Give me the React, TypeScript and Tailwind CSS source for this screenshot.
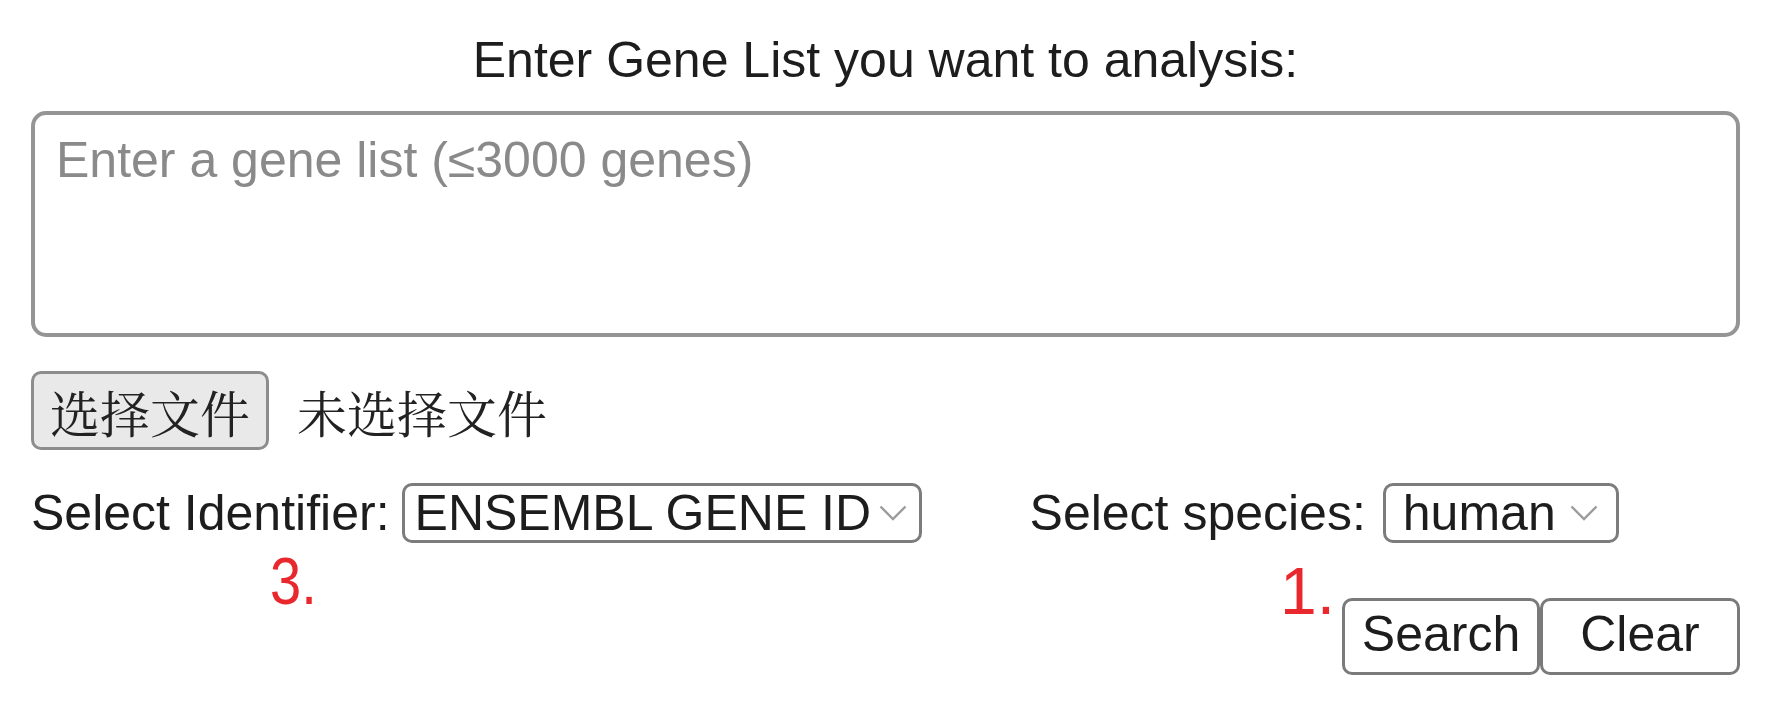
import React from "react";

function Chevron() {
  return (
    <svg width="28" height="16" viewBox="0 0 28 16" fill="none" className="shrink-0">
      <path d="M1.5 1.5 L14 14 L26.5 1.5" stroke="#9c9c9c" strokeWidth="2.4" />
    </svg>
  );
}

export default function App() {
  return (
    <div className="w-[1772px] h-[709px] bg-white pl-[31px] pr-[32px] font-['Liberation_Sans',Arial,sans-serif] text-[#1d1d1d] overflow-hidden">
      <h1 className="pt-[30px] text-center text-[50px] leading-[60px] font-normal">
        Enter Gene List you want to analysis:
      </h1>

      <textarea
        className="mt-[21px] block w-full h-[226px] resize-none rounded-[15px] border-4 border-[#959595] bg-white pl-[21px] pt-[15px] text-[50px] leading-[60px] text-[#1d1d1d] placeholder:text-[#8a8a8a] outline-none"
        placeholder="Enter a gene list (≤3000 genes)"
      />

      <div className="mt-[34px] flex items-center font-['Noto_Serif_CJK_SC','Noto_Sans_CJK_SC',serif] text-[50px] leading-[60px]">
        <button className="flex h-[79px] w-[238px] items-center justify-center rounded-[10px] border-[3px] border-[#8d8d8d] bg-[#e9e9e9] text-[#222]">
          选择文件
        </button>
        <span className="ml-[28px] text-[#222]">未选择文件</span>
      </div>

      <div className="mt-[33px] flex items-center text-[50px] leading-[60px]">
        <span>Select Identifier:</span>
        <div className="ml-[12px] flex h-[60px] w-[520px] items-center justify-between rounded-[10px] border-[3px] border-[#7c7c7c] pl-[10px] pr-[12px] leading-[54px]">
          <span>ENSEMBL GENE ID</span>
          <Chevron />
        </div>
        <span className="ml-[108px]">Select species:</span>
        <div className="ml-[17px] flex h-[60px] w-[236px] items-center justify-between rounded-[10px] border-[3px] border-[#7c7c7c] pl-[17px] pr-[18px] leading-[54px]">
          <span>human</span>
          <Chevron />
        </div>
      </div>

      <div className="mt-[5px] flex items-start justify-between">
        <span className="ml-[239px] inline-block origin-left scale-x-[0.85] text-[66px] leading-[66px] text-[#e8282c]">3.</span>
        <div className="flex items-start">
          <span className="mt-[10px] text-[66px] leading-[66px] text-[#e8282c]">1.</span>
          <div className="ml-[7px] mt-[50px] flex">
            <button className="flex h-[77px] w-[198px] items-start justify-center rounded-[10px] border-[3px] border-[#7a7a7a] bg-white text-[50px] leading-[66px] text-[#1d1d1d]">
              Search
            </button>
            <button className="flex h-[77px] w-[200px] items-start justify-center rounded-[10px] border-[3px] border-[#7a7a7a] bg-white text-[50px] leading-[66px] text-[#1d1d1d]">
              Clear
            </button>
          </div>
        </div>
      </div>
    </div>
  );
}
